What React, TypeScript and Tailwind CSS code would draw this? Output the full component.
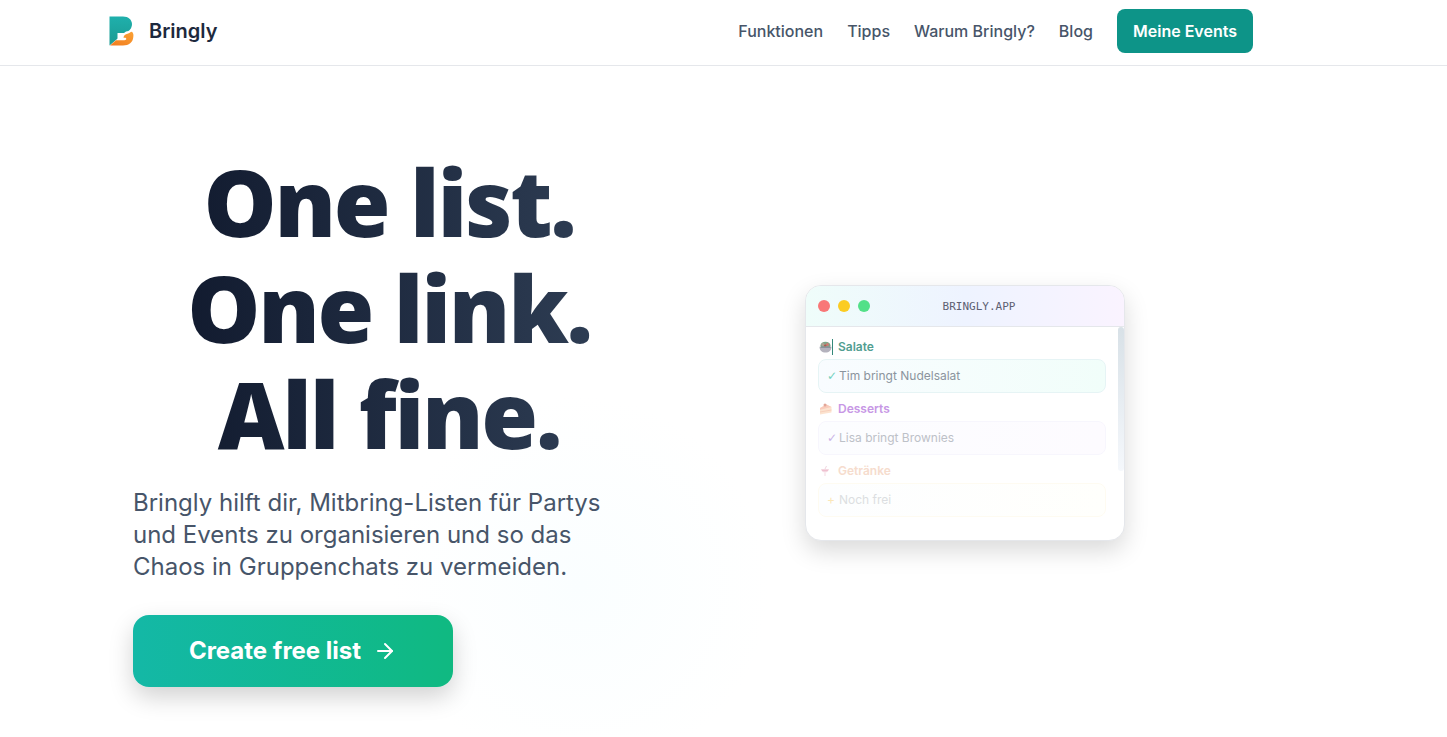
import { ArrowRight } from "lucide-react"

const navLinks = [
  { label: "Funktionen", href: "#funktionen" },
  { label: "Tipps", href: "#tipps" },
  { label: "Warum Bringly?", href: "#warum" },
  { label: "Blog", href: "#blog" },
]

function Logo() {
  return (
    <svg viewBox="0 0 40 40" className="h-10 w-10" aria-hidden="true">
      <defs>
        <linearGradient id="teal" x1="0" y1="0" x2="0" y2="1">
          <stop offset="0" stopColor="#1fb0ac" />
          <stop offset="1" stopColor="#1b9a92" />
        </linearGradient>
        <linearGradient id="orange" x1="0" y1="1" x2="1" y2="0">
          <stop offset="0" stopColor="#f07a1e" />
          <stop offset="1" stopColor="#fba235" />
        </linearGradient>
      </defs>
      <path
        d="M8.5 5.5H22C27.5 5.5 31 9 31 13C31 17 28.5 20.5 25 20.5L23 22H16.5V27.5L15 29L8.5 34.5Z"
        fill="url(#teal)"
      />
      <path
        d="M9 34.5L15 29.2H23.5C25.8 29.2 25.8 26.8 24 26.8H22.5C22.5 24.5 24.5 23 26.5 22.8C28.5 22.6 29 20.8 31 20.8C32.6 22.3 32.6 24 32.3 26C31.8 31.5 28 34.5 22 34.5Z"
        fill="url(#orange)"
      />
    </svg>
  )
}

function SaladIcon() {
  return (
    <svg viewBox="0 0 14 14" className="h-3.5 w-3.5" aria-hidden="true">
      <ellipse cx="7.5" cy="5.5" rx="5" ry="3.8" fill="#7fa588" />
      <circle cx="5" cy="4.5" r="1.6" fill="#b3a294" />
      <circle cx="9.4" cy="4.4" r="1.5" fill="#cf7b73" />
      <circle cx="7.2" cy="5.6" r="1.2" fill="#b5584f" />
      <path d="M1.5 6.8H13.5C13.5 10.5 11 12.6 7.5 12.6S1.5 10.5 1.5 6.8Z" fill="#b4b2bd" />
      <path d="M2.5 7.2H12.5" stroke="#77838c" />
    </svg>
  )
}

function CakeIcon() {
  return (
    <svg viewBox="0 0 14 14" className="h-3.5 w-3.5 opacity-60" aria-hidden="true">
      <path d="M2 6L8.5 2.5L13.5 5V10.5L2 12.5Z" fill="#fbd2b0" />
      <path d="M2 6L8.5 2.5L13.5 5L2 7.8Z" fill="#f6a98e" />
      <path d="M2 10L13.5 8" stroke="#f3b08e" />
      <circle cx="7" cy="3" r="1.5" fill="#cf6c55" />
    </svg>
  )
}

function DrinkIcon() {
  return (
    <svg viewBox="0 0 14 14" className="h-3.5 w-3.5 opacity-40" aria-hidden="true">
      <path d="M3 5H11L8 9V12H6V9Z" fill="#f5d2dd" />
      <path d="M3 5.5H11L9.5 7.5H4.5Z" fill="#d8678c" />
      <path d="M7 5L8.5 2" stroke="#d99ab0" />
    </svg>
  )
}

function AppPreview() {
  return (
    <div className="h-64 w-80 overflow-hidden rounded-2xl border border-gray-200 bg-white shadow-[0_10px_24px_rgba(0,0,0,0.15)]">
      <div className="flex h-[41px] items-center border-b border-gray-200 bg-linear-to-r from-[#effdfa] via-[#eef3ff] to-[#faf3ff] px-3">
        <div className="flex gap-2">
          <span className="h-3 w-3 rounded-full bg-[#f87777]" />
          <span className="h-3 w-3 rounded-full bg-[#fbcc22]" />
          <span className="h-3 w-3 rounded-full bg-[#53e088]" />
        </div>
        <span className="flex-1 pt-0.5 pr-6 text-center font-['DejaVu_Sans_Mono',monospace] text-[11px] text-[#5d6072]">
          BRINGLY.APP
        </span>
      </div>
      <div className="flex">
        <div className="flex-1 p-3 text-xs">
          <div className="flex h-4 items-center font-semibold text-[#529e91]">
            <SaladIcon />
            <span className="mr-[5px] h-4 w-px bg-[#348879]" />
            Salate
          </div>
          <div className="mt-1 mb-2 flex h-[34px] items-center rounded-lg border border-[#e6f4f5] bg-linear-to-r from-[#f9fcff] to-[#f1fefa] px-2 text-[#8b949d]">
            <span className="w-3 font-['DejaVu_Sans',sans-serif] text-[#72d2bd]">✓</span>
            <span>Tim bringt Nudelsalat</span>
          </div>
          <div className="flex h-4 items-center gap-1.5 font-semibold text-[#c797e5]">
            <CakeIcon />
            Desserts
          </div>
          <div className="mt-1 mb-2 flex h-[34px] items-center rounded-lg border border-[#f7f6fd] bg-linear-to-r from-[#fcfdff] to-[#fdfbff] px-2 text-[#bdc1c8]">
            <span className="w-3 font-['DejaVu_Sans',sans-serif] text-[#cab3e6]">✓</span>
            <span>Lisa bringt Brownies</span>
          </div>
          <div className="flex h-4 items-center gap-1.5 font-semibold text-[#f6dccd]">
            <DrinkIcon />
            Getränke
          </div>
          <div className="mt-1 flex h-[34px] items-center rounded-lg border border-[#fefbf1] bg-linear-to-r from-[#fdfeff] to-[#fffffc] px-2 text-[#dcdee1]">
            <span className="w-3 text-[#fbe7b8]">+</span>
            <span>Noch frei</span>
          </div>
        </div>
        <div className="w-1.5">
          <div className="h-36 rounded-full bg-linear-to-b from-[#d8e1e7] to-[#f5f8fc]" />
        </div>
      </div>
    </div>
  )
}

export default function App() {
  return (
    <div className="min-h-screen bg-white font-[Inter,sans-serif]">
      <header className="border-b border-gray-200 pt-[9px] pr-[93px] pb-3">
        <div className="mx-auto flex max-w-6xl items-center justify-between">
          <a href="#" className="flex items-center gap-2 text-xl font-semibold text-slate-800">
            <Logo />
            Bringly
          </a>
          <nav className="flex items-center gap-6 font-medium text-[#475569]">
            {navLinks.map((link) => (
              <a key={link.label} href={link.href}>
                {link.label}
              </a>
            ))}
            <a href="#events" className="rounded-lg bg-[#0d9488] px-4 py-2.5 font-semibold text-white">
              Meine Events
            </a>
          </nav>
        </div>
      </header>

      {/* Hero */}
      <main className="bg-[radial-gradient(circle_at_580px_520px,#fafeff_0,#ffffff_190px)] pr-[93px]">
        <section className="mx-auto grid max-w-6xl grid-cols-2 items-center gap-16 px-8 pt-[75px] pb-12">
          <div>
            <h1 className="bg-linear-to-r from-slate-900 to-slate-700 bg-clip-text pt-2 text-center font-['Noto_Sans',sans-serif] text-[92px] leading-[106px] font-black tracking-tight text-transparent">
              One list.
              <br />
              One link.
              <br />
              All fine.
            </h1>
            <p className="mt-5 text-2xl text-[#475569]">
              Bringly hilft dir, Mitbring-Listen für Partys und Events zu organisieren und so das Chaos in
              Gruppenchats zu vermeiden.
            </p>
            <button
              type="button"
              className="mt-8 flex h-[72px] w-80 items-center justify-center gap-3 rounded-2xl bg-linear-to-r from-[#14b8a6] to-[#10b981] text-2xl font-bold text-white shadow-[0_10px_24px_rgba(0,0,0,0.18)]"
            >
              Create free list
              <ArrowRight className="h-6 w-6" />
            </button>
          </div>
          <div className="flex justify-center pb-0.5">
            <AppPreview />
          </div>
        </section>
      </main>
    </div>
  )
}
